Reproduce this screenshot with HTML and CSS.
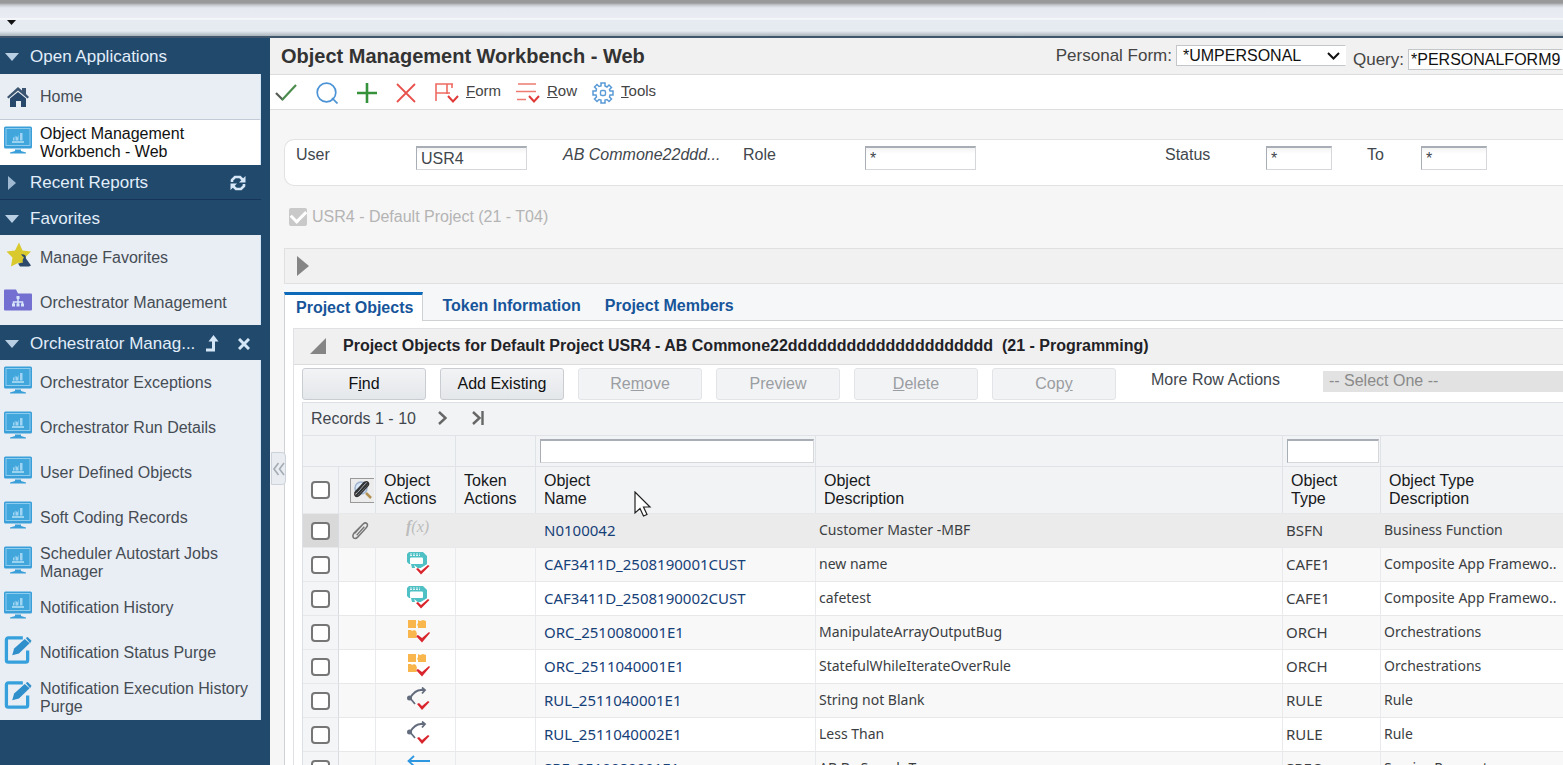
FILE: index.html
```html
<!DOCTYPE html>
<html lang="en">
<head>
<meta charset="utf-8">
<title>Object Management Workbench - Web</title>
<link rel="stylesheet" href="styles.css">
</head>
<body>
<svg class="sprite" aria-hidden="true">
  <symbol id="monitor" viewBox="0 0 28 27">
    <rect x="0" y="0" width="28" height="22" rx="1.5" fill="#3a9fd8"/>
    <rect x="2" y="2" width="24" height="17" fill="#41a6dc" stroke="#8fcdef" stroke-width="1"/>
    <path d="M8 15.500h12" stroke="#b9e2f7" stroke-width="1.500"/>
    <path d="M9 14v-2.500l1.500-1.500V14zM11.500 14V9l2 2 1-3v6zM16 14V6.500h2.500V14z" fill="#9fd5f2"/>
    <path d="M11 23h6v1.500l5 1.500v1H6v-1l5-1.500z" fill="#3a9fd8"/>
  </symbol>
  <symbol id="purge" viewBox="0 0 28 29">
    <path d="M19 2H4a2 2 0 0 0-2 2v21a2 2 0 0 0 2 2h18a2 2 0 0 0 2-2V15" fill="none" stroke="#35a0dc" stroke-width="3.400"/>
    <path d="M8 20l2-7L21 3l5 4.500L15 18z" fill="#2f8fcb"/>
    <path d="M22 2l2-1 4 4-1.500 2.500z" fill="#2f8fcb"/>
  </symbol>
  <symbol id="cafe" viewBox="0 0 24 24">
    <path d="M3 1h14l4 4v9l-3 3H6l-1-4H3L1 11V3z" fill="#4fc0c4"/>
    <path d="M4 3h10M4 4.500h10" stroke="#d9f3f4" stroke-dasharray="2 1"/>
    <rect x="4" y="6.500" width="13" height="6.500" rx="1" fill="#fff"/>
    <path d="M8 14l5 4 10-6v10H11z" fill="#fff"/>
    <path d="M10 18l2-1 3 3 7-6 1.500 1L15 23.500z" fill="#d9262e"/>
  </symbol>
  <symbol id="orch" viewBox="0 0 24 24">
    <path d="M2 1h8v8H2zM12 1l2 1 3-1 3 1v7h-8V7l-1-1 1-2zM2 11h3l1 1 2-1 2 1 1 3-1 2 1 2H2z" fill="#f8b64c"/>
    <path d="M10 17l2-1 4 3 7-6 1 1-8 9.500z" fill="#d9262e"/>
  </symbol>
  <symbol id="rule" viewBox="0 0 24 24">
    <path d="M4 11Q9 3 15 3h4M16 .500L19 3l-3 3.500M4 11l5 6" fill="none" stroke="#626c7d" stroke-width="1.800"/>
    <circle cx="3.500" cy="11" r="2.500" fill="#626c7d"/>
    <path d="M11 17l2-1 3 3 6-5 1.500 1-7.500 8z" fill="#d9262e"/>
  </symbol>
  <symbol id="clip" viewBox="0 0 20 20">
    <path d="M4 13l9-10q2-2 4 0 1 2-1 4L7 17q-2 2-4 1-2-2 0-5l9-9" fill="none" stroke="currentColor" stroke-width="1.600"/>
    <path d="M6 15l8-9" stroke="currentColor" stroke-width="1.400"/>
  </symbol>
</svg>

<header class="topbar">
  <button class="topbar-menu" aria-label="Menu"><svg width="9" height="5"><path d="M0 0h9L4.500 5z" fill="#111"/></svg></button>
</header>

<div class="shell">
  <nav class="sidebar">
    <section>
      <h2 class="side-head"><span class="tri-down"></span><span class="side-title">Open Applications</span></h2>
      <a class="side-item home" href="#"><svg class="home-icon" width="22" height="20" viewBox="0 0 22 20"><path d="M0 10L11 0l4 3.500V1h4v6l3 3-1.500 1.500L11 3.500 1.500 11.500z" fill="#3b5570"/><path d="M3 11.500L11 5l8 6.500V20h-5v-6H9v6H3z" fill="#27486a"/></svg><span>Home</span></a>
      <a class="side-item active" href="#"><svg class="app-icon"><use href="#monitor"/></svg><span>Object Management<br>Workbench - Web</span></a>
    </section>
    <section>
      <h2 class="side-head ruled"><span class="tri-right"></span><span class="side-title">Recent Reports</span>
        <button class="icon-btn" aria-label="Refresh"><svg width="16" height="16" viewBox="0 0 16 16"><path d="M2 7V5l3-3h5l3 3M14 9v2l-3 3H6l-3-3" fill="none" stroke="#d5e6f7" stroke-width="2.600"/><path d="M15.500 1v6.500H9zM.500 15V8.500H7z" fill="#d5e6f7"/></svg></button></h2>
    </section>
    <section>
      <h2 class="side-head"><span class="tri-down"></span><span class="side-title">Favorites</span></h2>
      <a class="side-item" href="#"><svg class="app-icon" viewBox="0 0 28 27"><path d="M15 1l3.500 8 8.500 1-6 6 1.500 9-7.500-4-8 4 1.500-9-6-6 8.500-1z" fill="#d9c92d"/><path d="M17 13q5-1 5 4l5 7-2 1H16l-2-3 5-1q-1-3 1-5z" fill="#2d4a6c"/></svg><span>Manage Favorites</span></a>
      <a class="side-item" href="#"><svg class="app-icon" viewBox="0 0 28 27"><path d="M0 4q0-1 1-1h11l2 4h13q1 0 1 1v15q0 1-1 1H1q-1 0-1-1z" fill="#7370d2"/><path d="M14 11v8M9.500 19v-3.500h9V19" stroke="#d4e4fa" stroke-width="1.500" fill="none"/><path d="M12.500 9.500h3v3h-3zM8 17h3v3H8zM12.500 17h3v3h-3zM17 17h3v3h-3z" fill="#d4e4fa"/></svg><span>Orchestrator Management</span></a>
    </section>
    <section>
      <h2 class="side-head"><span class="tri-down"></span><span class="side-title">Orchestrator Manag...</span>
        <button class="icon-btn" aria-label="Move up"><svg width="13" height="17" viewBox="0 0 13 17"><path d="M0 15h7.500V4" fill="none" stroke="#d5e6f7" stroke-width="3"/><path d="M2.500 6.500L7.500 0l5 6.500z" fill="#d5e6f7"/></svg></button>
        <button class="icon-btn close" aria-label="Close"><svg width="12" height="12" viewBox="0 0 12 12"><path d="M1 1l10 10M11 1L1 11" stroke="#d5e6f7" stroke-width="3"/></svg></button></h2>
      <a class="side-item" href="#"><svg class="app-icon"><use href="#monitor"/></svg><span>Orchestrator Exceptions</span></a>
      <a class="side-item" href="#"><svg class="app-icon"><use href="#monitor"/></svg><span>Orchestrator Run Details</span></a>
      <a class="side-item" href="#"><svg class="app-icon"><use href="#monitor"/></svg><span>User Defined Objects</span></a>
      <a class="side-item" href="#"><svg class="app-icon"><use href="#monitor"/></svg><span>Soft Coding Records</span></a>
      <a class="side-item" href="#"><svg class="app-icon"><use href="#monitor"/></svg><span>Scheduler Autostart Jobs<br>Manager</span></a>
      <a class="side-item" href="#"><svg class="app-icon"><use href="#monitor"/></svg><span>Notification History</span></a>
      <a class="side-item" href="#"><svg class="app-icon"><use href="#purge"/></svg><span>Notification Status Purge</span></a>
      <a class="side-item" href="#"><svg class="app-icon"><use href="#purge"/></svg><span>Notification Execution History<br>Purge</span></a>
    </section>
  </nav>

  <main class="main">
    <button class="collapse" aria-label="Collapse sidebar"><svg width="12" height="14" viewBox="0 0 12 14"><path d="M5.500 1L1 7l4.500 6M11 1L6.500 7l4.500 6" fill="none" stroke="#a3abb4" stroke-width="1.600"/></svg></button>

    <div class="titlebar">
      <h1>Object Management Workbench - Web</h1>
      <div class="pick"><label for="pform">Personal Form:</label>
        <span class="select-box"><select id="pform"><option>*UMPERSONAL</option></select><svg width="13" height="8" viewBox="0 0 13 8"><path d="M1 1l5.500 5.500L12 1" fill="none" stroke="#111" stroke-width="2"/></svg></span></div>
      <div class="pick query"><label for="query">Query:</label>
        <span class="select-box"><select id="query"><option>*PERSONALFORM9</option></select></span></div>
    </div>

    <div class="toolbar">
      <button aria-label="OK"><svg width="22" height="20" viewBox="0 0 22 20"><path d="M1 10l7 7" stroke="#555e55" stroke-width="2.200"/><path d="M7 17L21 2" stroke="#4b8c4d" stroke-width="2.200"/></svg></button>
      <button aria-label="Find"><svg width="22" height="22" viewBox="0 0 22 22"><circle cx="10.500" cy="10.500" r="9.300" fill="none" stroke="#4b93d6" stroke-width="1.700"/><path d="M16 16l5.500 5.500" stroke="#4b93d6" stroke-width="1.700"/></svg></button>
      <button aria-label="Add"><svg width="20" height="20"><path d="M10 0v20M0 10h20" stroke="#35923a" stroke-width="2.600"/></svg></button>
      <button aria-label="Delete"><svg width="20" height="20" viewBox="0 0 20 20"><path d="M1 1l18 18M19 1L1 19" stroke="#e8524c" stroke-width="1.800"/></svg></button>
      <button class="menu"><svg width="24" height="22" viewBox="0 0 24 22"><path d="M1 19V2h17M1 11h14M12 2v10M17 2v4" fill="none" stroke="#ee6b62" stroke-width="1.600"/><path d="M13 14l5 5.500 5-5.500" fill="none" stroke="#e03a38" stroke-width="2"/></svg><span><u>F</u>orm</span></button>
      <button class="menu"><svg width="24" height="22" viewBox="0 0 24 22"><path d="M2 2h18M0 9.500h20M1 17.500h9" stroke="#ee7a72" stroke-width="1.700"/><path d="M13 14l5 5.500 5-5.500" fill="none" stroke="#e03a38" stroke-width="2"/></svg><span><u>R</u>ow</span></button>
      <button class="menu"><svg width="22" height="22" viewBox="0 0 22 22"><path d="M9 1h4v3l2 1 2-2 2.500 2.500-2 2L18 9h3v4h-3l-.500 2 2 2-2.500 2.500-2-2-2 .500v3H9v-3l-2-.500-2 2L2.500 17l2-2L4 13H1V9h3l.500-2-2-2L5 2.500l2 2L9 4z" fill="none" stroke="#5b9bd6" stroke-width="1.500"/><rect x="8.500" y="8.500" width="5" height="5" rx="1.500" fill="none" stroke="#5b9bd6" stroke-width="1.400"/></svg><span><u>T</u>ools</span></button>
    </div>

    <div class="content">
      <form class="filters">
        <label for="user">User</label><input id="user" class="field wide" value="USR4">
        <em>AB Commone22ddd...</em>
        <label for="role">Role</label><input id="role" class="field wide" value="*">
        <label for="status">Status</label><input id="status" class="field" value="*">
        <label for="to">To</label><input id="to" class="field" value="*">
      </form>

      <label class="project"><input type="checkbox" checked disabled>USR4 - Default Project (21 - T04)</label>

      <div class="collapsed"><button class="icon-btn" aria-label="Expand"><svg width="12" height="20"><path d="M0 0l12 10L0 20z" fill="#858585"/></svg></button></div>

      <div class="tabs">
        <a class="tab current" href="#">Project Objects</a>
        <a class="tab" href="#">Token Information</a>
        <a class="tab" href="#">Project Members</a>
      </div>

      <div class="tab-body"><section class="group">
        <h2 class="group-head"><svg width="16" height="16"><path d="M16 0v16H0z" fill="#858585"/></svg><span>Project Objects for Default Project USR4 - AB Commone22ddddddddddddddddddddd&nbsp; (21 - Programming)</span></h2>
        <div class="group-body">
          <div class="actions">
            <button class="btn">F<u>i</u>nd</button>
            <button class="btn">Add Existing</button>
            <button class="btn" disabled>Re<u>m</u>ove</button>
            <button class="btn" disabled>Preview</button>
            <button class="btn" disabled><u>D</u>elete</button>
            <button class="btn" disabled>Cop<u>y</u></button>
            <label for="more">More Row Actions</label>
            <select id="more" disabled><option>-- Select One --</option></select>
          </div>
          <div class="grid">
            <div class="records"><span>Records 1 - 10</span>
              <button class="icon-btn" aria-label="Next"><svg width="9" height="14" viewBox="0 0 9 14"><path d="M1 1l6.500 6L1 13" fill="none" stroke="#666" stroke-width="2.400"/></svg></button>
              <button class="icon-btn" aria-label="Last"><svg width="12" height="14" viewBox="0 0 12 14"><path d="M1 1l6.500 6L1 13M10.500 0v14" fill="none" stroke="#666" stroke-width="2.400"/></svg></button></div>
            <table>
              <colgroup><col class="c-check"><col class="c-clip"><col class="c-act"><col class="c-act"><col class="c-name"><col><col class="c-type"><col class="c-tdesc"></colgroup>
              <thead>
                <tr class="qbe"><td colspan="2"></td><td></td><td></td><td><input class="field" aria-label="Filter object name"></td><td></td><td><input class="field" aria-label="Filter object type"></td><td></td></tr>
                <tr class="heads"><th class="sel"><input type="checkbox" aria-label="Select all"></th><th class="clip-cell"><span class="find-clip"><svg width="22" height="22" viewBox="0 0 22 22"><circle cx="10" cy="9" r="6" fill="#d9e6f5" stroke="#9eb4cf" stroke-width="1.500"/><path d="M15 14l5 5" stroke="#b3904f" stroke-width="2.500"/><use href="#clip" x="2" y="1" width="18" height="18"/><path d="M5 17L17 4M4 14L14 3" stroke="#333" stroke-width="2"/></svg></span></th><th>Object<br>Actions</th><th>Token<br>Actions</th><th>Object<br>Name</th><th>Object<br>Description</th><th>Object<br>Type</th><th>Object Type<br>Description</th></tr>
              </thead>
              <tbody>
                <tr class="selected"><td class="sel"><input type="checkbox" aria-label="Select N0100042"></td><td class="clip-cell"><svg class="clip"><use href="#clip"/></svg></td><td class="act"><span class="fx"><b>f</b>(x)</span></td><td></td><td><a href="#">N0100042</a></td><td class="desc">Customer Master -MBF</td><td>BSFN</td><td class="desc">Business Function</td></tr>
                <tr><td class="sel"><input type="checkbox" aria-label="Select row 2"></td><td></td><td class="act"><svg><use href="#cafe"/></svg></td><td></td><td><a href="#">CAF3411D_2508190001CUST</a></td><td class="desc">new name</td><td>CAFE1</td><td class="desc">Composite App Framewo..</td></tr>
                <tr><td class="sel"><input type="checkbox" aria-label="Select row 3"></td><td></td><td class="act"><svg><use href="#cafe"/></svg></td><td></td><td><a href="#">CAF3411D_2508190002CUST</a></td><td class="desc">cafetest</td><td>CAFE1</td><td class="desc">Composite App Framewo..</td></tr>
                <tr><td class="sel"><input type="checkbox" aria-label="Select row 4"></td><td></td><td class="act"><svg><use href="#orch"/></svg></td><td></td><td><a href="#">ORC_2510080001E1</a></td><td class="desc">ManipulateArrayOutputBug</td><td>ORCH</td><td class="desc">Orchestrations</td></tr>
                <tr><td class="sel"><input type="checkbox" aria-label="Select row 5"></td><td></td><td class="act"><svg><use href="#orch"/></svg></td><td></td><td><a href="#">ORC_2511040001E1</a></td><td class="desc">StatefulWhileIterateOverRule</td><td>ORCH</td><td class="desc">Orchestrations</td></tr>
                <tr><td class="sel"><input type="checkbox" aria-label="Select row 6"></td><td></td><td class="act"><svg><use href="#rule"/></svg></td><td></td><td><a href="#">RUL_2511040001E1</a></td><td class="desc">String not Blank</td><td>RULE</td><td class="desc">Rule</td></tr>
                <tr><td class="sel"><input type="checkbox" aria-label="Select row 7"></td><td></td><td class="act"><svg><use href="#rule"/></svg></td><td></td><td><a href="#">RUL_2511040002E1</a></td><td class="desc">Less Than</td><td>RULE</td><td class="desc">Rule</td></tr>
                <tr><td class="sel"><input type="checkbox" aria-label="Select row 8"></td><td></td><td class="act"><svg viewBox="0 0 24 24"><path d="M2 6h22M8 1L2.500 6 8 11" fill="none" stroke="#2f97e0" stroke-width="1.800"/></svg></td><td></td><td><a href="#">SRE_2510080001E1</a></td><td class="desc">AB By Search Type</td><td>SREQ</td><td class="desc">Service Request</td></tr>
              </tbody>
            </table>
          </div>
        </div>
      </section></div>
    </div>
  </main>
</div>
<svg class="cursor" width="18" height="27" viewBox="0 0 18 27"><path d="M1 1v21l5-4.500 3.500 7.500 3.500-1.500L9.500 16H16z" fill="#fff" stroke="#222" stroke-width="1.200"/></svg>
</body>
</html>
```

FILE: styles.css
```css
* { box-sizing: border-box; }
body {
  margin: 0;
  height: 100vh;
  display: flex;
  flex-direction: column;
  overflow: hidden;
  font: 16px/18px "Liberation Sans", Arial, sans-serif;
  color: #41474d;
  background: #f6f6f6;
}
button, input, select { font: inherit; color: inherit; }
a { text-decoration: none; color: inherit; }
h1, h2 { margin: 0; }
.sprite { position: absolute; width: 0; height: 0; }
.icon-btn { border: 0; background: none; padding: 0; display: flex; }

.topbar {
  flex: none;
  height: 38px;
  display: flex;
  align-items: center;
  padding: 8px 7px 0;
  border-bottom: 2px solid #3f566c;
  background: linear-gradient(#999 0 3px, #c5c8cc 5px, #e6eaf0 8px, #e9edf3 18px, #fff 19px, #e6ebf2 20px, #e6ebf2 31px, #aab2ba 36px);
}
.topbar-menu { border: 0; background: none; padding: 0; display: flex; }

.shell { flex: 1; min-height: 0; display: flex; }

.sidebar { flex: none; width: 270px; padding-right: 9px; background: #20496c; overflow: hidden; }
.side-head {
  display: flex;
  align-items: center;
  height: 35px;
  padding: 2px 11px 0 5px;
  color: #e2eefa;
  font-size: 17px;
  font-weight: normal;
}
section:first-child > .side-head { height: 36px; }
.side-head.ruled { border-bottom: 1px solid #15365a; }
.side-title { flex: 1; }
.side-head .icon-btn { margin-right: 4px; }
.side-head .close { margin: 0 0 0 15px; }
.tri-down, .tri-right { width: 25px; flex: none; }
.tri-down::before, .tri-right::before { content: ""; display: block; width: 0; height: 0; }
.tri-down::before { border: 7px solid transparent; border-top: 8px solid #b9cfe4; border-bottom: 0; }
.tri-right::before { margin-left: 3px; border: 7px solid transparent; border-left: 8px solid #9fb9d2; border-right: 0; }
.side-item {
  display: flex;
  align-items: center;
  gap: 8px;
  height: 45px;
  padding-left: 4px;
  background: #e9eef4;
  border-right: 1px solid #cfe3f7;
  color: #454c54;
  font-size: 16px;
}
.side-item.home { height: 46px; padding-left: 7px; gap: 11px; border-bottom: 1px solid #c3ccd6; }
.side-item.active { background: #fff; color: #111; }
.side-item span { white-space: nowrap; }
.app-icon { width: 28px; height: 28px; flex: none; align-self: flex-start; margin-top: 6px; }

.main { flex: 1; min-width: 0; position: relative; display: flex; flex-direction: column; overflow: hidden; }
.collapse {
  position: absolute;
  left: 1px;
  top: 414px;
  width: 15px;
  height: 33px;
  padding: 0;
  display: flex;
  align-items: center;
  justify-content: center;
  border: 1px solid #cdd3da;
  border-radius: 0 4px 4px 0;
  background: #e9edf2;
}
.titlebar {
  flex: none;
  height: 37px;
  display: flex;
  align-items: flex-start;
  gap: 7px;
  padding: 7px 0 0 11px;
  border-bottom: 1px solid #dcdcdc;
  background: #f2f1f1;
}
.titlebar h1 { flex: 1; font-size: 20px; line-height: 22px; color: #333; white-space: nowrap; }
.pick { display: flex; align-items: center; gap: 4px; font-size: 17px; color: #444; white-space: nowrap; }
.pick.query { padding-top: 4px; }
.select-box { display: flex; align-items: center; width: 170px; height: 21px; background: #fff; border: 1px solid #c4c7ca; border-right-color: #fff; padding-right: 5px; }
.query .select-box { width: 155px; padding-right: 0; }
.select-box select { appearance: none; flex: 1; min-width: 0; border: 0; background: none; padding: 0 0 0 6px; font-size: 16px; color: #111; }
.query .select-box select { padding-left: 2px; }

.toolbar { flex: none; height: 35px; display: flex; align-items: center; gap: 19px; padding: 1px 0 0 5px; background: #fff; border-bottom: 1px solid #ddd; }
.toolbar button { display: flex; align-items: center; border: 0; background: none; padding: 0; }
.toolbar .menu { gap: 7px; font-size: 15px; }
.toolbar .menu + .menu { margin-left: -4px; }
.toolbar .menu span { padding-bottom: 4px; color: #444; }

.content { flex: 1; min-height: 0; display: flex; flex-direction: column; padding: 29px 0 0 14px; }
.filters {
  flex: none;
  display: grid;
  grid-template-columns: 120px 147px 180px 122px 1fr 101px 101px 54px 130px;
  align-items: start;
  height: 47px;
  padding: 6px 12px 0 11px;
  background: #fff;
  border: 1px solid #e2e2e2;
  border-right: 0;
  border-radius: 10px 0 0 10px;
}
.field {
  width: 66px;
  height: 24px;
  padding: 0 4px;
  border: 1px solid #d5d7da;
  border-top: 2px solid #a9adb5;
  border-left: 1px solid #a9adb5;
  border-radius: 0;
  background: linear-gradient(#f3f3f4, #fff 6px);
}
.field.wide { width: 111px; }

.project { flex: none; display: flex; align-items: center; gap: 5px; height: 62px; padding-left: 5px; color: #b4b4b4; }
.project input { appearance: none; display: flex; align-items: center; justify-content: center; width: 18px; height: 18px; margin: 0; padding-bottom: 4px; border-radius: 2px; background: #c9c9c9; }
.project input::before { content: ""; width: 12px; height: 7px; border: solid #fff; border-width: 0 0 3px 3px; transform: rotate(-45deg); }

.collapsed { flex: none; height: 36px; display: flex; align-items: center; padding-left: 12px; background: #f1f1f1; border: 1px solid #e0e0e0; border-right: 0; }

.tabs { flex: none; display: flex; align-items: stretch; height: 37px; padding-top: 8px; border-bottom: 1px solid #cfd2d5; background: #f6f7f9; }
.tab { padding: 5px 10px; color: #17559a; font-weight: bold; }
.tab.current { margin: 0 9px -1px 0; padding: 4px 9px 4px 11px; border: solid #cfd2d5; border-width: 0 1px 0 1px; border-top: 3px solid #0d6ab8; background: #fff; }
.tab + .tab + .tab { padding-left: 14px; }

.tab-body { flex: 1; min-height: 0; padding: 7px 0 0 8px; border-left: 1px solid #cfd2d5; background: #fff; }
.group { height: 100%; border: 1px solid #dfe1e4; border-right: 0; border-bottom: 0; }
.group-head { display: flex; align-items: center; gap: 17px; height: 36px; padding: 0 0 2px 16px; font-size: 16px; color: #1f2226; background: #f0f0f0; border-bottom: 1px solid #dcdcdc; white-space: nowrap; }
.group-body { padding-left: 8px; }
.actions { display: flex; align-items: center; gap: 14px; height: 37px; padding-top: 1px; white-space: nowrap; }
.btn { flex: none; width: 124px; height: 32px; padding: 0; border: 1px solid #c9cdd2; border-radius: 3px; background: linear-gradient(#f2f3f5, #e4e7ea); color: #111; }
.btn:disabled { background: #f2f3f5; border-color: #e2e4e7; color: #9a9da1; }
.actions label { margin: 0 29px 8px 21px; }
.actions select { appearance: none; flex: 1; min-width: 0; height: 21px; margin-bottom: 6px; padding: 0 6px; border: 0; border-radius: 0; background: #e2e2e2; color: #8a8a8a; opacity: 1; }

.grid { border: 1px solid #dcdfe3; border-width: 1px 0 0 1px; }
.records { display: flex; align-items: center; gap: 22px; height: 32px; padding-left: 8px; background: #f2f3f5; }
.records .icon-btn { padding-bottom: 3px; }
.records .icon-btn + .icon-btn { margin-left: 3px; }

table { width: 100%; table-layout: fixed; border-collapse: separate; border-spacing: 0; }
.c-check { width: 36px; }
.c-clip { width: 37px; }
.c-act { width: 80px; }
.c-name { width: 280px; }
.c-type { width: 98px; }
.c-tdesc { width: 182px; }
th, td { padding: 0; text-align: left; border-right: 1px solid #e8eaed; white-space: nowrap; overflow: hidden; }
thead td, thead th { background: #f2f3f5; border-top: 1px solid #dfe2e6; border-right-color: #dfe2e6; }
tr > :last-child { border-right: 0; }
th { font-weight: normal; color: #16181b; padding-left: 8px; }
.qbe td { height: 31px; padding: 0 1px 0 4px; }
.qbe .field { display: block; width: 100%; background: #fff; }
.heads th { height: 47px; }
tbody td { height: 34px; padding: 0 0 2px 3px; border-top: 1px solid #e6e8ea; background: #fff; color: #3b3e42; font: 15px/18px "Noto Sans", sans-serif; }
tbody td.desc { font-size: 14px; }
tbody tr:nth-child(even) td { background: #f8f8f8; }
tbody td:nth-child(5) { padding-left: 8px; }
tbody td a { display: block; color: #164178; }
tbody tr.selected td { background: #ebebeb; border-right-color: #ebebeb; }
tbody tr td.sel { background: #f4f5f7; border-right-color: #d8dbdf; }
tbody tr.selected td.sel { background: #d9d9d9; }
.sel, th.sel { padding: 0 0 0 8px; }
tbody td.sel { padding: 0 0 0 8px; }
.sel input { appearance: none; display: block; width: 19px; height: 18px; margin: 0; border: 2px solid #767676; border-radius: 4px; background: #fff; }
.clip-cell { color: #333; }
th.clip-cell { padding-left: 11px; }
.find-clip { display: block; width: 24px; height: 25px; border: 1px solid #999; border-right: 0; background: #ececec; }
tbody td.clip-cell { padding: 0 0 0 12px; }
.clip { display: block; width: 19px; height: 19px; color: #777; }
tbody td.act { padding: 0 0 0 30px; }
.act svg { display: block; width: 24px; height: 24px; margin-bottom: 4px; }
.fx { font: italic 16px/18px "Liberation Serif", serif; color: #bcbcbc; display: block; margin-bottom: 7px; }

.cursor { position: absolute; left: 634px; top: 491px; }
```
